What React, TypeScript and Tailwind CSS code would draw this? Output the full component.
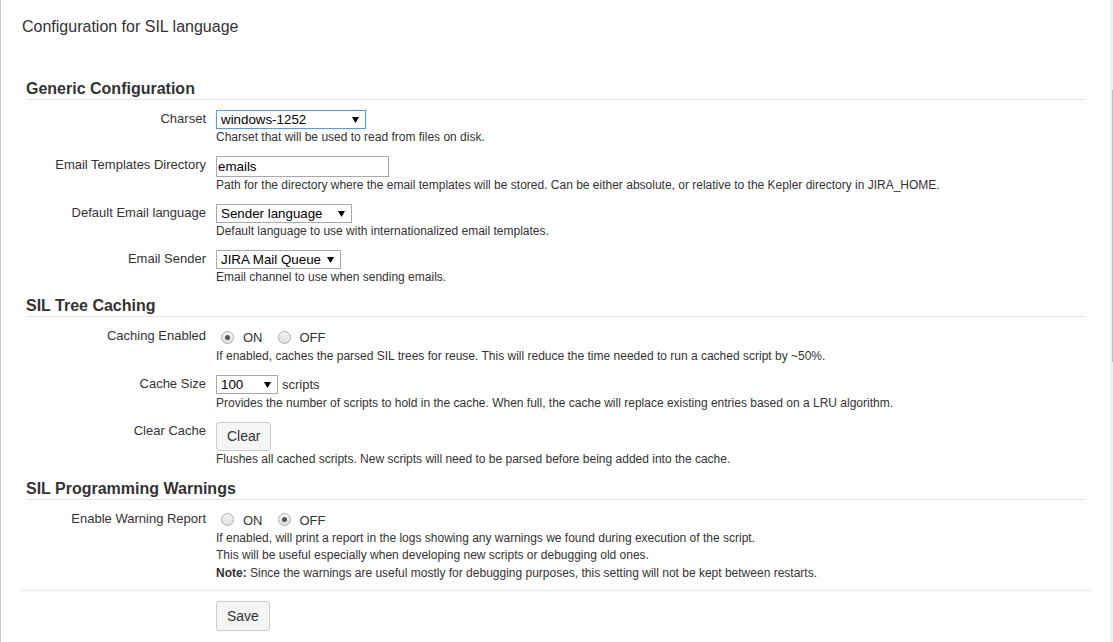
import type { ReactNode } from "react";

const font = { fontFamily: '"Liberation Sans", Arial, sans-serif' };

function Caret() {
  return (
    <svg width="7" height="6" viewBox="0 0 7 6" className="shrink-0" aria-hidden="true">
      <path d="M0 0H7L3.5 6Z" fill="#000" />
    </svg>
  );
}

function Select({ value, width, focused = false }: { value: string; width: string; focused?: boolean }) {
  return (
    <div
      className={`flex h-[19px] items-center justify-between bg-white pl-[4px] pr-[6px] text-[13.33px] leading-none text-black ${width} ${
        focused ? "border border-[#5b9dd9] shadow-[0_0_1px_#8ab8e6]" : "border border-[#a9a9a9]"
      }`}
    >
      <span>{value}</span>
      <Caret />
    </div>
  );
}

function Radio({ checked }: { checked: boolean }) {
  return (
    <span className="flex h-[13px] w-[13px] items-center justify-center rounded-full border border-[#adadad] bg-gradient-to-b from-[#f6f6f6] to-[#dedede]">
      {checked && <span className="h-[5px] w-[5px] rounded-full bg-[#555]" />}
    </span>
  );
}

function RadioPair({ on }: { on: boolean }) {
  return (
    <div className="flex h-[20px] items-center text-[13px] text-[#333]">
      <span className="ml-[5px]"><Radio checked={on} /></span>
      <span className="ml-[9px] mt-[2px]">ON</span>
      <span className="ml-[15px]"><Radio checked={!on} /></span>
      <span className="ml-[9px] mt-[2px]">OFF</span>
    </div>
  );
}

function Button({ children, tall = false }: { children: ReactNode; tall?: boolean }) {
  return (
    <button
      type="button"
      className={`${tall ? "h-[30px]" : "h-[29px]"} rounded-[3px] border border-[#cccccc] bg-[#f5f5f5] px-[10px] text-[14px] text-[#333]`}
    >
      {children}
    </button>
  );
}

function Row({
  label,
  children,
  help,
  last = false,
}: {
  label: string;
  children: ReactNode;
  help: ReactNode;
  last?: boolean;
}) {
  return (
    <div className={`${last ? "mb-[8px]" : "mb-[10px]"} flex`}>
      <div className="w-[180px] shrink-0 pt-[1px] text-right text-[13px] leading-[16px] text-[#333]">{label}</div>
      <div className="ml-[10px] min-w-0 flex-1">
        {children}
        <div className={`text-[12px] text-[#333] ${last ? "leading-[17.5px]" : "leading-[17px]"}`}>{help}</div>
      </div>
    </div>
  );
}

function Heading({ children }: { children: ReactNode }) {
  return (
    <h2 className="mb-[10px] border-b border-[#e5e5e5] text-[16px] font-bold leading-[20px] text-[#333]">
      {children}
    </h2>
  );
}

export default function App() {
  return (
    <div className="flex h-[642px] w-[1113px] overflow-hidden bg-white" style={font}>
      <div className="flex-1 border-l border-[#cccccc]">
        <h1 className="pl-[21px] pt-[17px] text-[16px] leading-[20px] text-[#333]">Configuration for SIL language</h1>

        <div className="ml-[25px] mr-[24px] mt-[42px]">
          <Heading>Generic Configuration</Heading>
          <Row label="Charset" help="Charset that will be used to read from files on disk.">
            <Select value="windows-1252" width="w-[150px]" focused />
          </Row>
          <Row
            label="Email Templates Directory"
            help="Path for the directory where the email templates will be stored. Can be either absolute, or relative to the Kepler directory in JIRA_HOME."
          >
            <div className="flex h-[21px] w-[173px] items-center border border-[#a9a9a9] bg-white pl-[1px] text-[13.33px] text-black">
              emails
            </div>
          </Row>
          <Row label="Default Email language" help="Default language to use with internationalized email templates.">
            <Select value="Sender language" width="w-[136px]" />
          </Row>
          <Row label="Email Sender" help="Email channel to use when sending emails.">
            <Select value="JIRA Mail Queue" width="w-[125px]" />
          </Row>

          <Heading>SIL Tree Caching</Heading>
          <Row
            label="Caching Enabled"
            help="If enabled, caches the parsed SIL trees for reuse. This will reduce the time needed to run a cached script by ~50%."
          >
            <div className="pb-[1px]">
              <RadioPair on />
            </div>
          </Row>
          <Row
            label="Cache Size"
            help="Provides the number of scripts to hold in the cache. When full, the cache will replace existing entries based on a LRU algorithm."
          >
            <div className="flex items-center">
              <Select value="100" width="w-[62px]" />
              <span className="ml-[4px] text-[13px] text-[#333]">scripts</span>
            </div>
          </Row>
          <Row label="Clear Cache" help="Flushes all cached scripts. New scripts will need to be parsed before being added into the cache.">
            <Button>Clear</Button>
          </Row>

          <div className="pt-[1px]">
            <Heading>SIL Programming Warnings</Heading>
          </div>
          <Row
            last
            label="Enable Warning Report"
            help={
              <>
                If enabled, will print a report in the logs showing any warnings we found during execution of the script.
                <br />
                This will be useful especially when developing new scripts or debugging old ones.
                <br />
                <b>Note:</b> Since the warnings are useful mostly for debugging purposes, this setting will not be kept between restarts.
              </>
            }
          >
            <RadioPair on={false} />
          </Row>
        </div>

        <div className="ml-[20px] mr-[19px] border-t border-[#e5e5e5] pl-[195px] pt-[10px]">
          <Button tall>Save</Button>
        </div>
      </div>
      <div className="w-[3px] shrink-0 bg-[#f1f1f1] pt-[90px]">
        <div className="ml-[2px] h-[272px] w-[1px] bg-[#c1c1c1]" />
      </div>
    </div>
  );
}
